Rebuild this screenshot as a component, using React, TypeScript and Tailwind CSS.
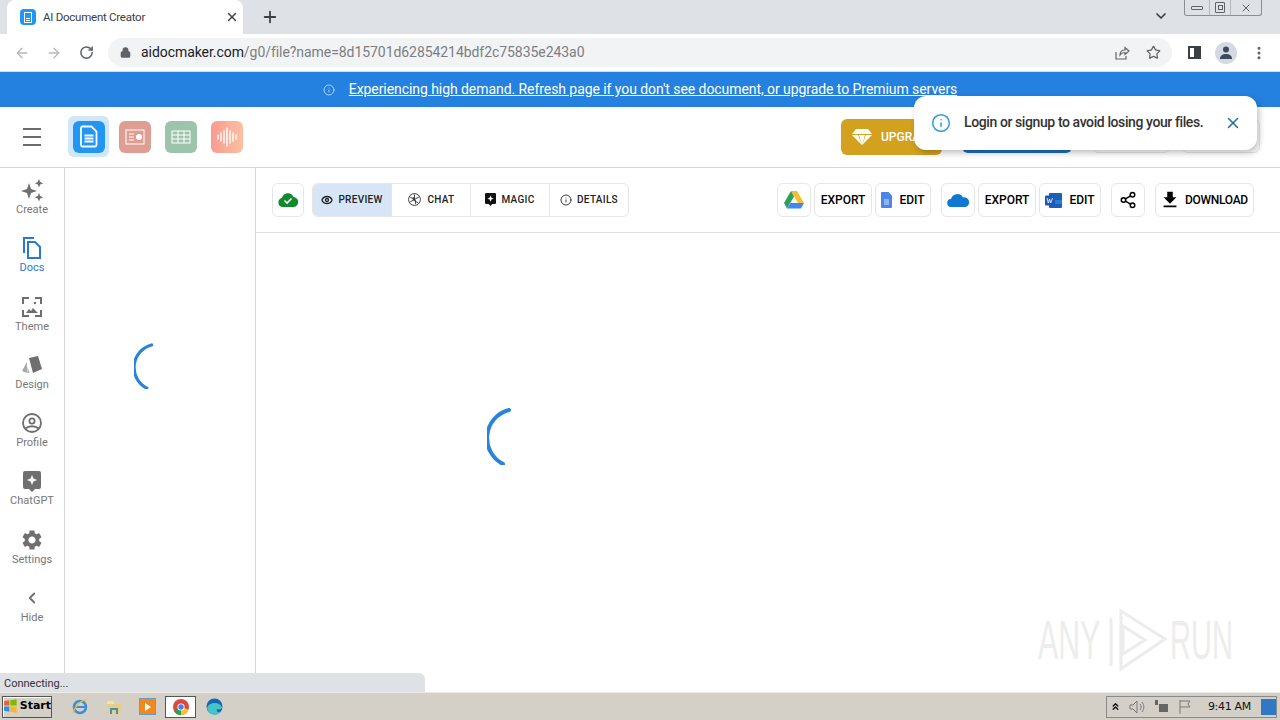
import React from "react";
import { ArrowLeft, ArrowRight, RotateCw, Lock, Star, MoreVertical, ChevronDown, ChevronsUp, Plus, X, Info, Eye, ChevronLeft, Share2 } from "lucide-react";
import { MdFileDownload, MdSettings } from "react-icons/md";

const Spinner = ({ size }: { size: number }) => (
  <svg width={size} height={size} viewBox="0 0 60 60" fill="none">
    <path d="M22 5 A 29 29 0 0 0 16 59" stroke="#2b82dc" strokeWidth="4" strokeLinecap="round" />
  </svg>
);

const DocGlyph = () => (
  <svg width="18" height="23" viewBox="0 0 18 23" fill="none">
    <path d="M2 1.5h9.5L16.5 6.5V20a1.5 1.5 0 0 1-1.5 1.5H2.5A1.5 1.5 0 0 1 1 20V3a1.5 1.5 0 0 1 1-1.5Z" stroke="#fff" strokeWidth="1.8" />
    <path d="M4.5 10.5h9M4.5 13.5h9M4.5 16.5h9" stroke="#fff" strokeWidth="1.8" />
  </svg>
);

const SideItem = ({ label, active, icon }: { label: string; active?: boolean; icon: React.ReactNode }) => (
  <div className="flex h-[58.3px] flex-col items-center">
    <div className="flex h-[24px] items-center justify-center">{icon}</div>
    <span className={`mt-[1px] text-[11px] leading-[14px] ${active ? "text-[#2b78d0]" : "text-[#777777]"}`}>{label}</span>
  </div>
);

const Pill = ({ children, className = "" }: { children: React.ReactNode; className?: string }) => (
  <div className={`flex h-[34px] items-center justify-center rounded-md border border-[#e6e6e6] bg-white text-[12px] font-medium text-black ${className}`}>
    {children}
  </div>
);

const Tab = ({ children, className = "" }: { children: React.ReactNode; className?: string }) => (
  <div className={`flex h-full items-center justify-center gap-[5px] border-r border-[#e6e6e6] pb-[1px] text-[10px] font-medium tracking-[0.3px] text-[#222] last:border-r-0 ${className}`}>
    {children}
  </div>
);

export default function App() {
  return (
    <div className="relative flex h-[720px] w-[1280px] flex-col overflow-hidden bg-white font-['Roboto',sans-serif]">
      {/* browser tabs */}
      <div className="flex h-[34px] shrink-0 items-end bg-[#dee1e6] pl-[7px]">
        <div className="flex h-[34px] w-[236px] items-center rounded-t-lg bg-white pl-[13px] pr-[5px]">
          <div className="flex h-[16px] w-[16px] items-center justify-center rounded-sm bg-[#2196f3]">
            <div className="flex h-[11px] w-[8px] flex-col justify-end gap-[1px] border border-white p-[1px]">
              <div className="h-[1px] bg-white" />
              <div className="h-[1px] bg-white" />
            </div>
          </div>
          <span className="ml-[7px] flex-1 pt-[1px] text-[11.5px] tracking-[-0.25px] text-[#3c4043]">AI Document Creator</span>
          <X size={14} strokeWidth={2.4} className="mr-[-1px] text-[#3c4043]" />
        </div>
        <Plus size={18} strokeWidth={2.4} className="mb-[8px] ml-[18px] text-[#3c4043]" />
        <div className="flex-1" />
        <ChevronDown size={16} strokeWidth={2.6} className="mb-[10px] mr-[15px] text-[#3c4043]" />
        <div className="mb-[18px] mr-[18px] flex h-[16px] w-[78px] items-center rounded-b-[3px] border border-t-0 border-[#8a8d92] text-[#5f6368]">
          <div className="flex h-full w-[24px] items-center justify-center">
            <div className="h-[4px] w-[12px] rounded-[1px] border border-[#5f6368]" />
          </div>
          <div className="flex h-full w-[22px] items-center justify-center border-x border-[#b5b7bb]">
            <div className="flex h-[11px] w-[10px] items-center justify-center rounded-[1px] border border-[#5f6368]">
              <div className="h-[5px] w-[5px] border border-[#5f6368]" />
            </div>
          </div>
          <div className="flex h-full flex-1 items-center justify-center">
            <X size={12} strokeWidth={2} />
          </div>
        </div>
      </div>

      {/* address bar */}
      <div className="flex h-[38px] shrink-0 items-center border-b border-[#d8dadd] bg-white pl-[14px]">
        <ArrowLeft size={16} strokeWidth={2} className="text-[#b5b7ba]" />
        <ArrowRight size={16} strokeWidth={2} className="ml-[16px] text-[#b5b7ba]" />
        <RotateCw size={15} strokeWidth={2.4} className="ml-[17px] text-[#5f6368]" />
        <div className="ml-[14px] flex h-[29px] w-[1064px] items-center rounded-full bg-[#f1f3f4] pl-[12px]">
          <Lock size={11} strokeWidth={3} fill="#5f6368" className="text-[#5f6368]" />
          <span className="ml-[10px] flex-1 text-[14px] tracking-[-0.06px] text-[#7b7e83]">
            <span className="text-[#202124]">aidocmaker.com</span>/g0/file?name=8d15701d62854214bdf2c75835e243a0
          </span>
          <svg width="16" height="16" viewBox="0 0 16 16" fill="none" stroke="#5f6368" strokeWidth="1.2">
            <path d="M2 7v7h10v-3M6 10c0-3 2-5 5-5V2.5L15 6l-4 3.5V7.5c-2 0-4 1-5 2.5Z" />
          </svg>
          <Star size={15} strokeWidth={2} className="ml-[16px] mr-[11px] text-[#5f6368]" />
        </div>
        <div className="ml-[16px] flex h-[13px] w-[13px] justify-end border-2 border-[#3c4043]">
          <div className="h-full w-[5px] bg-[#3c4043]" />
        </div>
        <div className="ml-[14px] flex h-[22px] w-[22px] items-center justify-center rounded-full bg-[#d5d9e2]">
          <svg width="12" height="13" viewBox="0 0 12 13" fill="#414a5c">
            <circle cx="6" cy="3.5" r="3" />
            <path d="M0 13c0-3.5 2.500-5 6-5s6 1.500 6 5Z" />
          </svg>
        </div>
        <MoreVertical size={16} strokeWidth={2.6} className="ml-[14px] text-[#5f6368]" />
      </div>

      {/* banner */}
      <div className="flex h-[35px] shrink-0 items-center justify-center bg-[#2481e0] text-[14px] tracking-[-0.065px] text-white">
        <Info size={12} strokeWidth={1.6} className="mr-[14px] text-[#cfe4fa]" />
        <span className="underline">Experiencing high demand. Refresh page if you don't see document, or upgrade to Premium servers</span>
      </div>

      {/* app header */}
      <div className="flex h-[61px] shrink-0 items-center border-b border-[#d6d6d6] pb-[1px] pl-[23px]">
        <div className="flex w-[18px] flex-col gap-[6px]">
          <div className="h-[2px] bg-[#6b6b6b]" />
          <div className="h-[2px] bg-[#6b6b6b]" />
          <div className="h-[2px] bg-[#6b6b6b]" />
        </div>
        <div className="ml-[27px] flex h-[41px] w-[41px] items-center justify-center rounded-md bg-[#cfe6fb]">
          <div className="flex h-[32px] w-[32px] items-center justify-center rounded-md bg-[#2196f3]">
            <DocGlyph />
          </div>
        </div>
        <div className="ml-[10px] flex h-[32px] w-[32px] items-center justify-center rounded-md bg-[#e09d92]">
          <svg width="20" height="16" viewBox="0 0 20 16" fill="none" stroke="#fff">
            <rect x="1" y="1" width="18" height="14" />
            <path d="M4 5h5M4 8h5M4 11h5" />
            <circle cx="14" cy="8" r="2.6" fill="#fff" />
          </svg>
        </div>
        <div className="ml-[14px] flex h-[32px] w-[32px] items-center justify-center rounded-md bg-[#9cc4ab]">
          <svg width="20" height="14" viewBox="0 0 20 14" fill="none" stroke="#fff">
            <rect x="1" y="1" width="18" height="12" />
            <path d="M1 5h18M1 9h18M7 1v12M13 1v12" />
          </svg>
        </div>
        <div className="ml-[14px] flex h-[32px] w-[32px] items-center justify-center rounded-md bg-gradient-to-r from-[#fb9a8f] to-[#fcc0a2]">
          <svg width="22" height="20" viewBox="0 0 22 20" stroke="#fff" strokeWidth="1.4" strokeLinecap="round">
            <path d="M2 8v4M5 6v8M8 4v12M11 1v18M14 4v12M17 6v8M20 8v4" />
          </svg>
        </div>
        <div className="flex-1" />
        <div className="flex h-[36px] w-[101px] items-center rounded-md bg-[#d4a11f] pl-[11px] text-[12px] font-medium text-white">
          <svg width="20" height="18" viewBox="0 0 20 18" fill="#fff">
            <path d="M4 1h12l4 5H0ZM0 7h6l4 10ZM20 7h-6l-4 10ZM7 7h6l-3 10Z" />
          </svg>
          <span className="ml-[9px]">UPGRADE</span>
        </div>
        <div className="mb-[2px] ml-[20px] h-[34px] w-[110px] rounded-md bg-[#1f6fc4]" />
        <div className="mb-[2px] ml-[20px] h-[34px] w-[78px] rounded-md border border-[#e6e6e6]" />
        <div className="mb-[2px] ml-[12px] mr-[20px] h-[34px] w-[78px] rounded-md border border-[#e6e6e6]" />
      </div>

      {/* body */}
      <div className="flex min-h-0 flex-1">
        <div className="flex w-[65px] shrink-0 flex-col border-r border-[#d6d6d6] pt-[10px]">
          <SideItem
            label="Create"
            icon={
              <svg width="24" height="24" viewBox="0 0 24 24" fill="#6f6f6f">
                <path d="M9 5l2 6 6 2-6 2-2 6-2-6-6-2 6-2ZM19 1l1.200 3 3 1.200-3 1.200L19 9.500l-1.200-3.100-3-1.200 3-1.200ZM19 15l1.200 3 3 1.200-3 1.200-1.200 3-1.200-3-3-1.200 3-1.200Z" />
              </svg>
            }
          />
          <SideItem
            active
            label="Docs"
            icon={
              <svg width="20" height="22" viewBox="0 0 20 22" fill="none" stroke="#2b78d0" strokeWidth="2">
                <path d="M12 1H2v15" />
                <path d="M6 5h7l5 5v11H6Z" />
              </svg>
            }
          />
          <SideItem
            label="Theme"
            icon={
              <svg width="20" height="20" viewBox="0 0 20 20" fill="none" stroke="#6f6f6f" strokeWidth="2">
                <path d="M1 7V1h6M13 1h6v6M19 13v6h-6M7 19H1v-6" />
                <path d="M4 16l3-4 2 2 2-3 5 5Z" fill="#6f6f6f" stroke="none" />
                <circle cx="13" cy="6" r="1.200" fill="#6f6f6f" stroke="none" />
              </svg>
            }
          />
          <SideItem
            label="Design"
            icon={
              <svg width="22" height="20" viewBox="0 0 22 20" fill="#6f6f6f">
                <path d="M8 3l9-2 4 13-9 4Z" />
                <path d="M6 7L1 16l5 2ZM6.500 12l2 6H6.500Z" fill="#a8a8a8" />
              </svg>
            }
          />
          <SideItem
            label="Profile"
            icon={
              <svg width="20" height="20" viewBox="0 0 20 20" fill="none" stroke="#6f6f6f" strokeWidth="1.800">
                <circle cx="10" cy="10" r="9" />
                <circle cx="10" cy="8" r="2.600" />
                <path d="M3.500 15.500c3-3 10-3 13 0" />
              </svg>
            }
          />
          <SideItem
            label="ChatGPT"
            icon={
              <svg width="18" height="21" viewBox="0 0 18 21">
                <path d="M2 0h14a2 2 0 0 1 2 2v14a2 2 0 0 1-2 2h-4l-3 3-3-3H2a2 2 0 0 1-2-2V2a2 2 0 0 1 2-2Z" fill="#6f6f6f" />
                <path d="M9 4l1.500 3.500L14 9l-3.500 1.500L9 14l-1.500-3.500L4 9l3.500-1.500Z" fill="#fff" />
              </svg>
            }
          />
          <SideItem label="Settings" icon={<MdSettings size={24} className="text-[#6f6f6f]" />} />
          <SideItem label="Hide" icon={<ChevronLeft size={18} strokeWidth={2.4} className="text-[#6f6f6f]" />} />
        </div>

        <div className="flex w-[191px] shrink-0 border-r border-[#d6d6d6] pl-[69px] pt-[173px]">
          <div>
            <Spinner size={48} />
          </div>
        </div>

        <div className="flex min-w-0 flex-1 flex-col">
          <div className="flex h-[65px] shrink-0 items-center border-b border-[#dedede] pl-[16px] pr-[26px]">
            <Pill className="w-[32px]">
              <svg width="20" height="14" viewBox="0 0 20 14">
                <path d="M5 14a4.500 4.500 0 0 1-1-8.900A6 6 0 0 1 15.500 4 5 5 0 0 1 15 14Z" fill="#0f8a2c" />
                <path d="M6.500 7.500l2.500 2.500 4.500-4.500" stroke="#fff" strokeWidth="1.600" fill="none" />
              </svg>
            </Pill>
            <div className="ml-[8px] flex h-[34px] w-[317px] overflow-hidden rounded-md border border-[#e6e6e6]">
              <Tab className="w-[79px] bg-[#d6e6f6]">
                <Eye size={12} strokeWidth={2.6} className="text-[#222]" />
                PREVIEW
              </Tab>
              <Tab className="w-[79px]">
                <svg width="15" height="15" viewBox="0 0 24 24" fill="none" stroke="#333" strokeWidth="1.500">
                  <circle cx="12" cy="12" r="9.500" />
                  <path d="M12 4v10l6 3.500M5 8l8.500 5v6M19 8l-9 5v-5M5 16l6-3.500" />
                </svg>
                CHAT
              </Tab>
              <Tab className="w-[79px]">
                <svg width="11" height="13" viewBox="0 0 18 21">
                  <path d="M2 0h14a2 2 0 0 1 2 2v14a2 2 0 0 1-2 2h-4l-3 3-3-3H2a2 2 0 0 1-2-2V2a2 2 0 0 1 2-2Z" fill="#111" />
                  <path d="M9 4l1.500 3.500L14 9l-3.500 1.500L9 14l-1.500-3.500L4 9l3.500-1.500Z" fill="#fff" />
                </svg>
                MAGIC
              </Tab>
              <Tab className="flex-1">
                <Info size={12} strokeWidth={1.800} className="text-[#222]" />
                DETAILS
              </Tab>
            </div>
            <div className="flex-1" />
            <Pill className="w-[34px]">
              <svg width="20" height="18" viewBox="0 0 20 18">
                <path d="M7 0h6l7 12h-6Z" fill="#f5bf2f" />
                <path d="M7 0l-7 12 3 5.500L10 5.500Z" fill="#2e9e5b" />
                <path d="M6.500 12H20l-3 5.500H3Z" fill="#4285f4" />
              </svg>
            </Pill>
            <Pill className="ml-[3px] w-[58px]">EXPORT</Pill>
            <Pill className="ml-[3px] w-[56px] gap-[7px]">
              <svg width="11" height="16" viewBox="0 0 11 16">
                <path d="M0 1a1 1 0 0 1 1-1h6.500L11 3.500V15a1 1 0 0 1-1 1H1a1 1 0 0 1-1-1Z" fill="#4a86e8" />
                <path d="M3 8h5M3 10h5M3 12h5" stroke="#cfe0fb" />
              </svg>
              EDIT
            </Pill>
            <Pill className="ml-[10px] w-[34px]">
              <svg width="23" height="14" viewBox="0 0 23 14">
                <path d="M4.500 14a4 4 0 0 1-.5-8A6.500 6.500 0 0 1 16 4.500a4.800 4.800 0 0 1 2.500 9.500Z" fill="#0f78d4" />
              </svg>
            </Pill>
            <Pill className="ml-[3px] w-[58px]">EXPORT</Pill>
            <Pill className="ml-[3px] w-[62px] gap-[7px]">
              <svg width="17" height="15" viewBox="0 0 17 15">
                <rect x="4" width="13" height="15" rx="1" fill="#1c5fb8" />
                <rect x="4" y="7" width="13" height="4" fill="#2b7cd3" />
                <rect width="10" height="10" y="2.500" rx="1" fill="#185abd" />
                <path d="M2 5l1.300 5 1.200-4 1.200 4L7.500 5" stroke="#fff" strokeWidth=".8" fill="none" />
              </svg>
              EDIT
            </Pill>
            <Pill className="ml-[10px] w-[34px]">
              <Share2 size={18} strokeWidth={2} />
            </Pill>
            <Pill className="ml-[10px] w-[99px] gap-[4px] pr-[2px] tracking-[-0.3px]">
              <MdFileDownload size={22} />
              DOWNLOAD
            </Pill>
          </div>
          <div className="flex flex-1 pl-[231px] pt-[172px]">
            <Spinner size={60} />
          </div>
        </div>
      </div>

      {/* taskbar */}
      <div className="flex h-[28px] shrink-0 items-center border-t border-[#ecebe6] bg-[#d4d0c8] pl-[2px] font-['DejaVu_Sans',sans-serif]">
        <div className="flex h-[22px] w-[50px] items-center justify-center gap-[2px] border border-[#555] bg-[#d4d0c8] text-[11px] font-bold text-black shadow-[inset_1px_1px_0_#fff]">
          <svg width="15" height="15" viewBox="0 0 14 14">
            <path d="M1 2l5-1v5H1Z" fill="#e8622a" />
            <path d="M7 1l6-1v6H7Z" fill="#7fba00" />
            <path d="M1 7h5v5l-5-1Z" fill="#2f8fe0" />
            <path d="M7 7h6v6l-6-1Z" fill="#f5b921" />
          </svg>
          Start
        </div>
        <svg width="18" height="18" viewBox="0 0 18 18" fill="none" className="ml-[19px]">
          <circle cx="9" cy="9" r="6" stroke="#3a8fd8" strokeWidth="2.600" />
          <path d="M3 9h12" stroke="#3a8fd8" strokeWidth="2" />
          <path d="M2 15C5 6 12 1 16 2" stroke="#e8c04a" strokeWidth="1.200" />
        </svg>
        <svg width="16" height="16" viewBox="0 0 16 16" className="ml-[17px]">
          <path d="M1 5h14v10H1Z" fill="#e8cf85" />
          <path d="M1 2h6l2 3H1Z" fill="#f4e2a8" />
          <path d="M4 9h8v6h-2v-4H6v4H4Z" fill="#3f8fbf" />
        </svg>
        <div className="ml-[17px] flex h-[17px] w-[17px] items-center justify-center border border-[#6a9bd0] bg-[#f08a1d]">
          <div className="h-0 w-0 border-y-[4px] border-l-[6px] border-y-transparent border-l-white" />
        </div>
        <div className="ml-[9px] flex h-[22px] w-[31px] items-center justify-center border border-[#555] bg-white">
          <svg width="16" height="16" viewBox="0 0 16 16">
            <circle cx="8" cy="8" r="8" fill="#e0463a" />
            <path d="M8 8L1 12a8 8 0 0 0 7 4Z" fill="#2f9e4f" />
            <path d="M8 8l7.500 2.500A8 8 0 0 1 8 16Z" fill="#f7c32e" />
            <circle cx="8" cy="8" r="3.600" fill="#fff" />
            <circle cx="8" cy="8" r="2.700" fill="#3f83ea" />
          </svg>
        </div>
        <svg width="17" height="17" viewBox="0 0 17 17" className="ml-[10px]">
          <circle cx="8.500" cy="8.500" r="8" fill="#1268b3" />
          <path d="M1 10c2-6 12-7 15-1 0 2-3 3-5 2-1 3 2 4 4 3a8 8 0 0 1-14-4Z" fill="#45c3c9" />
        </svg>
        <div className="flex-1" />
        <div className="mr-[3px] flex h-[22px] w-[171px] items-center border border-[#8a8a8a] pl-[3px] text-[11px] text-[#111]">
          <ChevronsUp size={11} strokeWidth={3} />
          <svg width="16" height="14" viewBox="0 0 16 14" className="ml-[8px]" fill="none" stroke="#777">
            <path d="M1 5h3l4-4v12l-4-4H1ZM11 4c1.500 2 1.500 4 0 6M13 2c2.500 3 2.500 7 0 10" />
          </svg>
          <svg width="16" height="15" viewBox="0 0 16 15" className="ml-[8px]" fill="#666">
            <path d="M2 1h3v5H2ZM6 5h9v8H6Z" />
          </svg>
          <svg width="14" height="15" viewBox="0 0 14 15" className="ml-[9px]" fill="none" stroke="#777">
            <path d="M2 1v14M2 2h10l-2 3 2 3H2" />
          </svg>
          <span className="ml-[16px] whitespace-nowrap pt-[1px] tracking-[-0.3px]">9:41 AM</span>
          <div className="ml-[10px] h-[16px] w-[15px] bg-[#2f78c8]" />
        </div>
      </div>

      {/* connecting status */}
      <div className="absolute bottom-[28px] left-0 flex h-[19px] w-[425px] items-center rounded-tr-md bg-[#dee1e6] pl-[4px] pt-[3px] text-[11px] text-[#333]">
        Connecting...
      </div>

      {/* toast */}
      <div className="absolute left-[914px] top-[96px] flex h-[54px] w-[343px] items-center rounded-xl bg-white pl-[17px] shadow-[2px_3px_6px_rgba(0,0,0,0.25)]">
        <Info size={20} strokeWidth={1.800} className="text-[#2a9fd6]" />
        <span className="mb-[1px] ml-[13px] text-[14px] font-medium tracking-[-0.4px] text-[#333]">Login or signup to avoid losing your files.</span>
        <X size={18} strokeWidth={2} className="ml-[21px] text-[#1f6f9c]" />
      </div>

      {/* watermark */}
      <div className="absolute left-[1038px] top-[608px] flex h-[64px] items-center font-['Liberation_Sans',sans-serif] text-[55px] text-[#ededed]">
        <span className="block w-[62px] origin-left scale-x-[0.55] whitespace-nowrap">ANY</span>
        <svg width="60" height="64" viewBox="0 0 60 64" fill="none" stroke="#ececec" strokeWidth="3" className="ml-[7px]">
          <path d="M4 10v48M14 3l44 28-44 30ZM16 18l22 14-22 14Z" />
        </svg>
        <span className="ml-[3px] block w-[62px] origin-left scale-x-[0.53] whitespace-nowrap">RUN</span>
      </div>
    </div>
  );
}
